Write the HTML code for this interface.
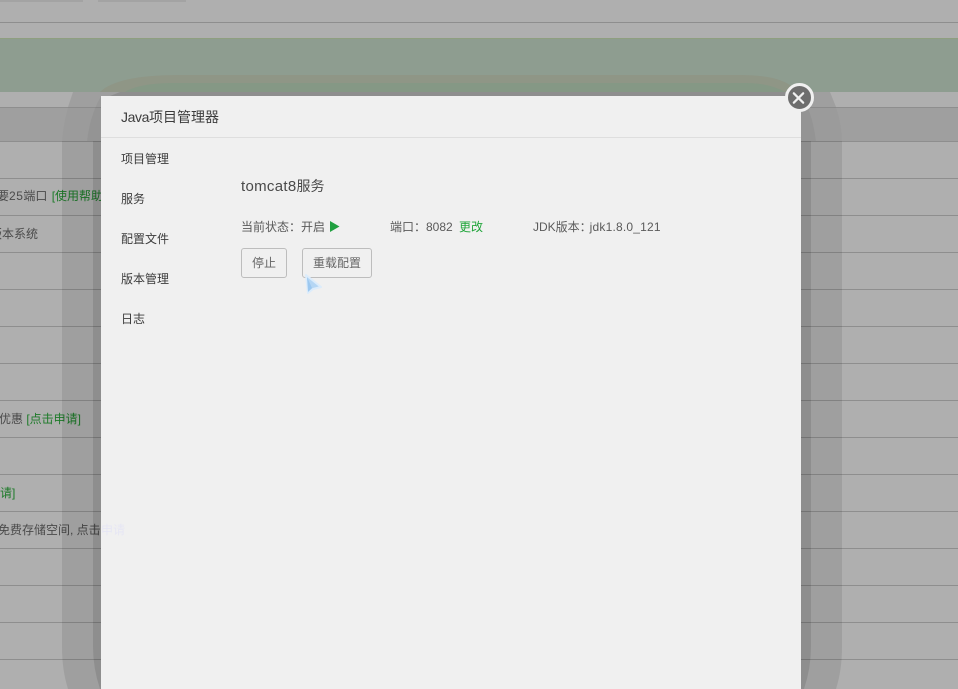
<!DOCTYPE html>
<html><head><meta charset="utf-8">
<style>
html,body{margin:0;padding:0;width:958px;height:689px;overflow:hidden}
body{position:relative;background:#afafaf;font-family:"Liberation Sans","Noto Sans CJK SC",sans-serif;font-size:12px;color:#333}
div,svg{position:absolute}
.l{left:0;width:958px;height:1px;background:#8e8e8e}
.t{white-space:nowrap;line-height:16px;font-size:12px;color:#4a4a4a}
.g{color:#1c7a28}
.nav{left:121px;font-size:12px;color:#3c3c3c;line-height:16px;white-space:nowrap}
.btn{box-sizing:border-box;top:248px;height:30px;border:1px solid #bdbdbd;border-radius:3px;font-size:12px;line-height:29px;text-align:center;color:#666}
</style></head><body>
<div style="left:0;top:0;width:83px;height:2px;background:#a3a3a3"></div>
<div style="left:98px;top:0;width:88px;height:2px;background:#a3a3a3"></div>
<div class="l" style="top:22px"></div>
<div style="left:0;top:38px;width:958px;height:54px;background:#8e9d90"></div>
<div style="left:0;top:38px;width:958px;height:1px;background:#8f9f80"></div>
<div style="left:0;top:107px;width:958px;height:34px;background:#9f9f9f"></div>
<div class="l" style="top:107px"></div>
<div class="l" style="top:141px"></div>
<div class="l" style="top:178px"></div>
<div class="l" style="top:215px"></div>
<div class="l" style="top:252px"></div>
<div class="l" style="top:289px"></div>
<div class="l" style="top:326px"></div>
<div class="l" style="top:363px"></div>
<div class="l" style="top:400px"></div>
<div class="l" style="top:437px"></div>
<div class="l" style="top:474px"></div>
<div class="l" style="top:511px"></div>
<div class="l" style="top:548px"></div>
<div class="l" style="top:585px"></div>
<div class="l" style="top:622px"></div>
<div class="l" style="top:659px"></div>

<div class="t" style="left:-3px;top:188px">要<span style="letter-spacing:.5px">25</span>端口&nbsp;<span class="g" style="margin-left:1px">[使用帮助]</span></div>
<div class="t" style="left:-10px;top:226px">版本系统</div>
<div class="t" style="left:-1px;top:411px">优惠 <span class="g">[点击申请]</span></div>
<div class="t g" style="left:-12px;top:485px">申请]</div>
<div class="t" style="left:-2px;top:522px">免费存储空间, 点击申请</div>

<svg style="left:0;top:0" width="958" height="689" viewBox="0 0 958 689">
<path d="M100,92 C112,80 140,75 180,75 L740,75 Q775,75 790,85 L795,92Z" fill="#8f9686"/>
<path d="M125,92 C135,86 150,83 175,83 L745,83 Q770,83 785,92Z" fill="#859885"/>
<path d="M73,92 L830,92 L836,107 L68,107Z" fill="#000" fill-opacity=".09"/>
<path d="M68,107 L836,107 Q842,125 842,141 L62,141 Q63,125 68,107Z" fill="#000" fill-opacity=".02"/>
<path d="M62,141 L842,141 L842,647 Q842,670 836,689 L68,689 Q62,670 62,647Z" fill="#000" fill-opacity=".09"/>
<path d="M120,92 L785,92 L785,96 L110,96Z" fill="#000" fill-opacity=".1"/>
<path d="M101,96 L801,96 Q812,110 816,141 L87,141 Q90,115 101,96Z" fill="#000" fill-opacity=".04"/>
<path d="M93,141 L811,141 L811,647 Q811,668 804,689 L100,689 Q93,668 93,647Z" fill="#000" fill-opacity=".1"/>
</svg>

<div style="left:101px;top:96px;width:700px;height:593px;background:#f0f0f0"></div>
<div style="left:101px;top:137px;width:700px;height:1px;background:#dedede"></div>
<div class="t" style="left:101px;top:522px;width:24px;overflow:hidden;color:#e6e6f4">申请</div>
<div style="left:121px;top:108px;font-size:14px;line-height:18px;color:#3c3c3c;white-space:nowrap"><span style="letter-spacing:-.4px">Java</span>项目管理器</div>
<div class="nav" style="top:151px">项目管理</div>
<div class="nav" style="top:191px">服务</div>
<div class="nav" style="top:231px">配置文件</div>
<div class="nav" style="top:271px">版本管理</div>
<div class="nav" style="top:311px">日志</div>

<div style="left:241px;top:177px;font-size:14px;line-height:18px;color:#4a4a4a;white-space:nowrap"><span style="font-size:15px;letter-spacing:.3px">tomcat8</span>服务</div>
<div class="t" style="left:241px;top:219px;color:#5a5a5a">当前状态：开启</div>
<svg style="left:330px;top:221px" width="10" height="11" viewBox="0 0 10 11"><polygon points="0,0 9.5,5.5 0,11" fill="#20a040"/></svg>
<div class="t" style="left:390px;top:219px;color:#5a5a5a">端口：8082</div>
<div class="t" style="left:459px;top:219px;color:#20a53a">更改</div>
<div class="t" style="left:533px;top:219px;color:#5a5a5a">JDK版本：<span style="margin-left:-2px;letter-spacing:.2px">jdk1.8.0_121</span></div>
<div class="btn" style="left:241px;width:46px">停止</div>
<div class="btn" style="left:302px;width:70px">重载配置</div>
<svg style="left:302px;top:272px" width="22" height="24" viewBox="0 0 22 24"><polygon points="4,3 19,15 11,17 6,21" fill="#b5d6f4" stroke="#dcecfb" stroke-width="2" stroke-linejoin="round"/><polygon points="5,5 10,16 6,20" fill="#9cc8f0"/></svg>

<div style="left:785px;top:83px;width:29px;height:29px;box-sizing:border-box;border-radius:50%;background:#6e6e6e;border:3px solid #f0f0f0"></div>
<svg style="left:792px;top:91px" width="14" height="14" viewBox="0 0 14 14"><path d="M1.8 2.3L11.2 11.7M11.2 2.3L1.8 11.7" stroke="#f0f0f0" stroke-width="2.2" stroke-linecap="round"/></svg>
</body></html>
